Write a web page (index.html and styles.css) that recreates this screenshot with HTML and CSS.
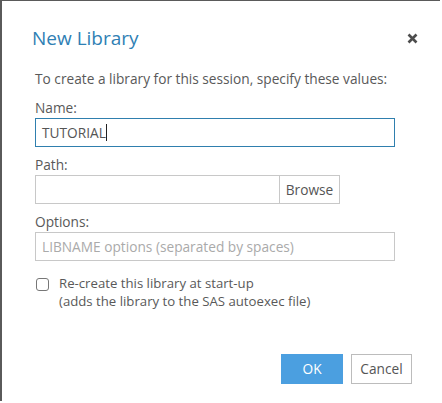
FILE: index.html
```html
<!DOCTYPE html>
<html>
<head>
<meta charset="utf-8">
<link rel="stylesheet" href="styles.css">
</head>
<body>
<div class="dialog">
  <div class="header">
    <h1 class="title">New Library</h1>
    <span class="close">
      <svg width="11" height="11" viewBox="0 0 11 11"><path d="M1.5 1.5 L9.5 9.5 M9.5 1.5 L1.5 9.5" stroke="#4d4d4d" stroke-width="2.6" stroke-linecap="butt"/></svg>
    </span>
  </div>
  <div class="body">
    <p class="intro">To create a library for this session, specify these values:</p>
    <label class="label first">Name:</label>
    <div class="input focused">TUTORIAL<span class="caret"></span></div>
    <label class="label">Path:</label>
    <div class="path-row">
      <div class="input path"></div>
      <div class="browse">Browse</div>
    </div>
    <label class="label">Options:</label>
    <div class="input placeholder">LIBNAME options (separated by spaces)</div>
    <div class="check-row">
      <span class="checkbox"></span>
      <div class="check-text">
        <div class="check-line">Re-create this library at start-up</div>
        <div class="check-line">(adds the library to the SAS autoexec file)</div>
      </div>
    </div>
  </div>
  <div class="footer">
    <div class="btn ok">OK</div>
    <div class="btn cancel">Cancel</div>
  </div>
</div>
</body>
</html>
```
FILE: styles.css
```css
html, body {
  margin: 0;
  padding: 0;
  background: #fff;
}
body {
  font-family: "Open Sans", "Noto Sans", sans-serif;
  color: #595959;
}
.dialog {
  width: 440px;
  height: 401px;
  border-left: 2px solid #5a5a5a;
  border-top: 1px solid #5a5a5a;
  box-sizing: border-box;
  position: relative;
}
.header {
  display: flex;
  align-items: center;
  justify-content: space-between;
  padding: 24px 22px 0 30px;
  height: 26px;
}
.title {
  margin: 0;
  font-size: 19px;
  line-height: 26px;
  font-weight: 400;
  color: #2f80b4;
}
.close {
  display: flex;
}
.body {
  padding: 19px 0 0 33px;
  width: 360px;
}
.intro {
  margin: 0;
  font-size: 13.7px;
  line-height: 18px;
  height: 18px;
  white-space: nowrap;
}
.label {
  display: block;
  font-size: 13.7px;
  line-height: 16px;
  height: 16px;
  margin: 10px 0 2px;
}
.label.first {
  margin-top: 12px;
}
.input {
  box-sizing: border-box;
  height: 29px;
  border: 1px solid #c8c8c8;
  font-size: 13.7px;
  line-height: 27px;
  padding-left: 6px;
  color: #555;
  display: flex;
  align-items: center;
}
.input.focused {
  border-color: #2f7fae;
}
.caret {
  display: inline-block;
  width: 1px;
  height: 17px;
  background: #222;
}
.path-row {
  display: flex;
  width: 305px;
}
.input.path {
  flex: 1;
}
.browse {
  box-sizing: border-box;
  width: 60px;
  height: 29px;
  border: 1px solid #c8c8c8;
  border-left: none;
  font-size: 13.7px;
  line-height: 27px;
  text-align: center;
  color: #555;
}
.placeholder {
  color: #aaa;
}
.check-row {
  display: flex;
  align-items: flex-start;
  margin-top: 13px;
  margin-left: 1px;
}
.checkbox {
  box-sizing: border-box;
  width: 13px;
  height: 13px;
  border: 1px solid #777;
  border-radius: 3px;
  margin-top: 4px;
  flex: none;
}
.check-text {
  margin-left: 10px;
  font-size: 13.2px;
}
.check-line {
  line-height: 18px;
  height: 18px;
}
.footer {
  position: absolute;
  right: 28px;
  bottom: 17px;
  display: flex;
  gap: 8px;
}
.btn {
  box-sizing: border-box;
  width: 62px;
  height: 30px;
  font-size: 13.7px;
  line-height: 28px;
  text-align: center;
}
.ok {
  background: #4b9fe0;
  color: #fff;
  border: 1px solid #4b9fe0;
}
.cancel {
  width: 61px;
  background: #fff;
  border: 1px solid #bcbcbc;
  color: #555;
}
```
